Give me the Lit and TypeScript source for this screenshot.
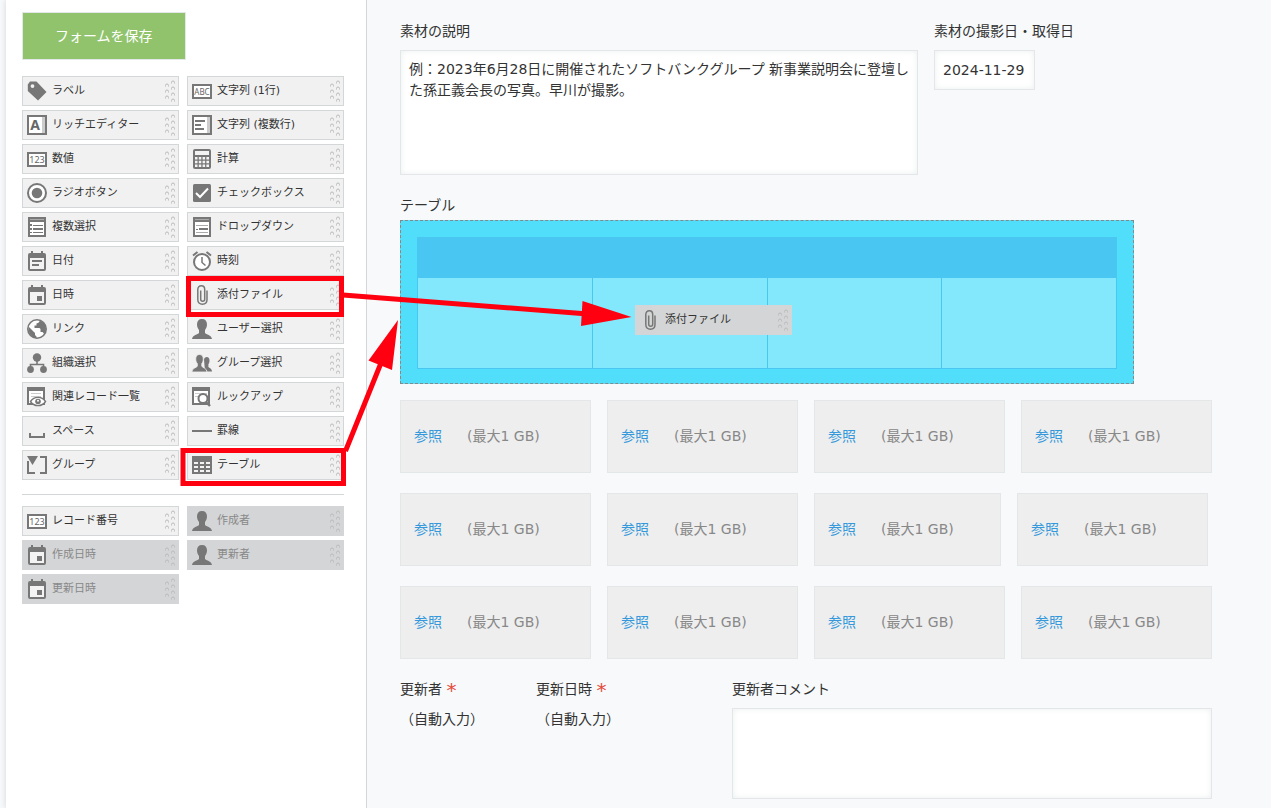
import { LitElement, html, css, svg } from "lit";
import { customElement, property } from "lit/decorators.js";

const G = "#777";
const box = (x: number, y: number, w: number, h: number, fill = "#fff") =>
  svg`<rect x=${x} y=${y} width=${w} height=${h} fill=${fill} stroke=${G} stroke-width="2"/>`;
const calendarTop = svg`<path fill=${G} d="M3 2h1V0h2v2h8V0h2v2h1q2 0 2 2v14q0 2-2 2H3q-2 0-2-2V4q0-2 2-2z"/><path fill="#f3f3f3" d="M3 7h14v11H3z"/>`;
const person = svg`<path fill=${G} d="M10 0c3.300 0 5 2 5 5.500 0 2-.8 4.200-2 5.500v3c1 1.500 6.500 2 7 6H0c.5-4 6-4.500 7-6v-3c-1.200-1.300-2-3.500-2-5.500C5 2 6.700 0 10 0z"/>`;

const ICONS: Record<string, unknown> = {
  label: svg`<path fill=${G} fill-rule="evenodd" d="M3 .5h6.500L19.500 11 11 19.500.8 10V3.500zM5.500 3.200a1.900 1.900 0 1 0 0 3.800 1.900 1.900 0 0 0 0-3.800z"/>`,
  text: svg`${box(1, 4, 18, 13)}<text x="10" y="14" text-anchor="middle" class="glyph" font-size="8">ABC</text>`,
  rich: svg`${box(1, 1, 18, 18)}<path fill="#ccc" d="M15 2h3v16h-3z"/><text x="8" y="15" text-anchor="middle" class="glyph bold" font-size="14">A</text>`,
  multi: svg`${box(1, 1, 18, 18)}<path fill="#ccc" d="M15 2h3v16h-3z"/><path fill=${G} d="M3 5h10v2H3zM3 9h6v2H3zM3 13h9v2H3z"/>`,
  number: svg`${box(1, 4, 18, 13)}<text x="10" y="14" text-anchor="middle" class="glyph" font-size="9">123</text>`,
  calc: svg`<rect x="1" y="0" width="18" height="20" rx="2" fill=${G}/><path fill="#f3f3f3" d="M3 2h14v4H3zM3 8h2.500v2.500H3zM6.800 8h2.500v2.500H6.800zM10.600 8h2.500v2.500h-2.500zM14.400 8H17v2.500h-2.600zM3 11.700h2.500v2.500H3zM6.800 11.700h2.500v2.500H6.800zM10.600 11.700h2.500v2.500h-2.500zM14.400 11.700H17v2.500h-2.600zM3 15.400h2.500v2.500H3zM6.800 15.400h2.500v2.500H6.800zM10.600 15.400h2.500v2.500h-2.500zM14.400 15.400H17v2.500h-2.600z"/>`,
  radio: svg`<circle cx="10" cy="10" r="9" fill="#fff" stroke=${G} stroke-width="2"/><circle cx="10" cy="10" r="5.300" fill=${G}/>`,
  check: svg`<rect x="1" y="1" width="18" height="18" rx="1.500" fill=${G}/><path d="M4 10l4 4 8-8.500" fill="none" stroke="#fff" stroke-width="2"/>`,
  list: svg`${box(2, 1, 16, 18)}<path fill=${G} d="M1 0h18v5H1z"/><path fill="#aaa" d="M3 2h14v1H3z"/><path fill=${G} d="M3 7h2v2H3zM3 11h2v2H3zM3 15h2v1H3zM6 8h10v1H6zM6 11h10v2H6zM6 15h10v1H6z"/>`,
  drop: svg`${box(2, 1, 16, 18)}<path fill=${G} d="M1 0h18v5H1z"/><path fill="#aaa" d="M3 2h14v1H3zM4 8h12v1H4z"/><path fill=${G} d="M4 12h2v1H4zM7 11h9v2H7z"/><path fill="#aaa" d="M4 15h12v1H4z"/>`,
  date: svg`${calendarTop}<path fill=${G} d="M5 9h10v2H5zM5 13h7v2H5z"/>`,
  datetime: svg`${calendarTop}<path fill=${G} d="M10 11h5v5h-5z"/>`,
  time: svg`<circle cx="10" cy="11" r="8" fill="#fff" stroke=${G} stroke-width="2"/><path d="M1 4.500L5.500 1M19 4.500L14.500 1" stroke=${G} stroke-width="2"/><path d="M10 6v5.500l3.500 3" fill="none" stroke=${G} stroke-width="1.500"/>`,
  clip: svg`<path d="M15 5.500v9c0 3-1.800 4.700-4.600 4.700S5.800 17.500 5.800 14.500v-10C5.800 2.200 7.300.8 9.300.8s3.400 1.400 3.400 3.700v9.700c0 1.200-.8 2-2 2s-2-.8-2-2V5.500" fill="none" stroke=${G} stroke-width="1.500"/>`,
  link: svg`<circle cx="10" cy="10" r="9.200" fill="#fff" stroke=${G} stroke-width="1.600"/><path fill=${G} d="M1.500 7.500L8 14v2l1.500 1.500V19C4 18.500 1 14 1.500 7.500zM12.500 1.500c0 2-1 2.500-3 3v2H7.500v2.500h5l1 1v3h2l1.800 2C20.500 10 19 3.500 12.500 1.500z"/>`,
  user: person,
  org: svg`<circle cx="10" cy="4.500" r="4.200" fill=${G}/><circle cx="3.500" cy="16.500" r="3.400" fill=${G}/><circle cx="16.500" cy="16.500" r="3.400" fill=${G}/><path d="M10 8v3.500M3.500 14v-2.500h13V14" fill="none" stroke=${G} stroke-width="1.600"/>`,
  group: svg`<path fill=${G} d="M14.800 4c1.800 0 2.700 1.200 2.700 3.500 0 1.500-.4 3-1.100 3.800V14c.8 1 3.600 1.500 3.600 4.500h-7l-1-12c.3-1.600 1.200-2.500 2.800-2.500z"/><path fill=${G} stroke="#f3f3f3" stroke-width=".8" d="M7.500 1.500c2.500 0 3.800 1.600 3.800 4.500 0 1.800-.6 3.500-1.500 4.500v2.800c.9 1.400 5 1.900 5.200 5.700H-.2c.2-3.800 4.500-4.300 5.500-5.700v-2.800c-.9-1-1.600-2.700-1.600-4.500 0-2.900 1.300-4.500 3.800-4.500z"/>`,
  related: svg`${box(1, 1, 16, 16)}<path fill=${G} d="M0 0h18v4H0z"/><path fill="#ccc" d="M4 6h10v1H4zM4 9h10v1H4z"/><path d="M3.500 14.500C7 9 15 9 18.500 14.500 15 20 7 20 3.500 14.500z" fill="#fff" stroke=${G} stroke-width="1.400"/><circle cx="11" cy="14.500" r="2.800" fill=${G}/><circle cx="11" cy="13.700" r="1" fill="#fff"/>`,
  lookup: svg`${box(1, 1, 16, 16)}<path fill=${G} d="M0 0h18v4H0z"/><path fill="#ccc" d="M3 6h12v1H3zM3 9h3v1H3z"/><circle cx="11" cy="11.500" r="4.500" fill="#fff" stroke=${G} stroke-width="2"/><path d="M14 15l4 4" stroke=${G} stroke-width="2.400"/>`,
  space: svg`<path d="M3 12v4h14v-4" fill="none" stroke=${G} stroke-width="2"/>`,
  rule: svg`<path d="M0 10h20" stroke=${G} stroke-width="2"/>`,
  section: svg`<path d="M1 6v12h7M13 2h6v16h-6" fill="none" stroke=${G} stroke-width="2"/><path fill=${G} d="M0 1h11L5.500 10z"/>`,
  table: svg`<path fill=${G} d="M0 1h20v18H0z"/><path fill="#f3f3f3" d="M2 7h4v2H2zM8 7h4v2H8zM14 7h4v2h-4zM2 11h4v2H2zM8 11h4v2H8zM14 11h4v2h-4zM2 15h4v2H2zM8 15h4v2H8zM14 15h4v2h-4z"/>`,
};

type Part = { icon: string; name: string; disabled?: boolean };

const PARTS: Part[] = [
  { icon: "label", name: "ラベル" },
  { icon: "text", name: "文字列 (1行)" },
  { icon: "rich", name: "リッチエディター" },
  { icon: "multi", name: "文字列 (複数行)" },
  { icon: "number", name: "数値" },
  { icon: "calc", name: "計算" },
  { icon: "radio", name: "ラジオボタン" },
  { icon: "check", name: "チェックボックス" },
  { icon: "list", name: "複数選択" },
  { icon: "drop", name: "ドロップダウン" },
  { icon: "date", name: "日付" },
  { icon: "time", name: "時刻" },
  { icon: "datetime", name: "日時" },
  { icon: "clip", name: "添付ファイル" },
  { icon: "link", name: "リンク" },
  { icon: "user", name: "ユーザー選択" },
  { icon: "org", name: "組織選択" },
  { icon: "group", name: "グループ選択" },
  { icon: "related", name: "関連レコード一覧" },
  { icon: "lookup", name: "ルックアップ" },
  { icon: "space", name: "スペース" },
  { icon: "rule", name: "罫線" },
  { icon: "section", name: "グループ" },
  { icon: "table", name: "テーブル" },
];

const SYSTEM_PARTS: Part[] = [
  { icon: "number", name: "レコード番号" },
  { icon: "user", name: "作成者", disabled: true },
  { icon: "datetime", name: "作成日時", disabled: true },
  { icon: "user", name: "更新者", disabled: true },
  { icon: "datetime", name: "更新日時", disabled: true },
];

@customElement("form-part")
class FormPart extends LitElement {
  @property() icon = "label";
  @property() name = "";
  @property({ type: Boolean }) disabled = false;
  @property({ type: Boolean }) dragging = false;

  static styles = css`
    :host { display: block; }
    .part {
      display: flex;
      align-items: center;
      width: 100%;
      height: 30px;
      box-sizing: border-box;
      margin: 0;
      padding: 0 3px 0 4px;
      border: 1px solid #d4d7d7;
      border-radius: 0;
      background: #f1f1f1;
      color: #333;
      font: 11px/16px "DejaVu Sans", "Noto Sans CJK JP", sans-serif;
      text-align: left;
      cursor: move;
    }
    .part.off { background: #d4d5d7; border-color: #d4d5d7; color: #888; }
    .part.held { background: #d4d5d6; border-color: #d4d5d6; }
    .icon { width: 20px; height: 20px; flex: none; overflow: visible; }
    .name { flex: 1; padding-left: 5px; white-space: nowrap; }
    .grip { width: 10px; height: 22px; flex: none; }
    .glyph { font-family: "Noto Sans", sans-serif; fill: #666; }
    .bold { font-weight: bold; }
  `;

  render() {
    const state = this.disabled ? "off" : this.dragging ? "held" : "";
    const arcs = [
      [0, 3], [0, 9], [0, 15],
      [6, 0], [6, 6], [6, 12], [6, 18],
    ];
    return html`<button class="part ${state}" type="button" ?disabled=${this.disabled}>
      <svg class="icon" viewBox="0 0 20 20" aria-hidden="true">${ICONS[this.icon]}</svg>
      <span class="name">${this.name}</span>
      <svg class="grip" viewBox="0 0 10 22" aria-hidden="true">
        ${arcs.map(([x, y]) => svg`<path d="M${x + 0.5} ${y + 3.5}v-1q0-1.500 1.500-1.500t1.500 1.500v1" fill="none" stroke="#bbb"/>`)}
      </svg>
    </button>`;
  }
}

@customElement("app-root")
class AppRoot extends LitElement {
  static styles = css`
    :host {
      display: block;
      position: relative;
      color: #333;
      font: 14px/21px "DejaVu Sans", "Noto Sans CJK JP", sans-serif;
    }
    .page {
      display: grid;
      grid-template-columns: 367px 1fr;
      min-height: 100vh;
      background: #f7f9fa;
      overflow: hidden;
    }
    .side {
      margin-left: 6px;
      padding: 12px 22px 0 16px;
      background: #fff;
      border-right: 1px solid #d4d7d7;
      box-shadow: 0 0 6px #d4d7d7;
      clip-path: inset(0 0 0 -6px);
    }
    .save {
      display: block;
      height: 48px;
      padding: 0 32px;
      border: 1px solid #e3e7e8;
      background: #91c36c;
      color: #fff;
      font: inherit;
    }
    .parts {
      display: grid;
      grid-template-columns: 1fr 1fr;
      gap: 4px 8px;
      margin: 0;
      padding: 0;
      list-style: none;
    }
    .save + .parts { margin-top: 16px; }
    .rule { margin: 14px 0 11px; border: 0; border-top: 1px solid #d4d7d7; }
    .form { padding: 21px 59px 9px 33px; }
    .row { display: flex; gap: 16px; }
    .field { display: flex; flex-direction: column; gap: 8px; }
    .wide { width: 518px; }
    .user { width: 120px; }
    .stamp { width: 180px; }
    .grow { flex: 1; }
    .box {
      box-sizing: border-box;
      width: 100%;
      margin: 0;
      padding: 8px 7px 8px 8px;
      border: 1px solid #e3e7e8;
      border-radius: 0;
      background: #fff;
      box-shadow: 0 0 6px #eceff0 inset;
      color: #333;
      font: inherit;
      resize: none;
      outline: none;
    }
    .note { height: 125px; overflow: hidden; }
    .day { width: 101px; height: 40px; }
    .comment { height: 91px; }
    .caption { margin: 20px 0 4px; font: inherit; }
    .drop {
      position: relative;
      width: 734px;
      box-sizing: border-box;
      padding: 16px 16px 14px;
      border: 1px dashed #888;
      background: #50defb;
    }
    .grid {
      width: 100%;
      height: 132px;
      border-collapse: collapse;
      table-layout: fixed;
      background: #84e8fd;
    }
    .grid th { height: 39px; padding: 0; background: #49c6f2; border: 1px solid #49c6f2; }
    .grid td { padding: 0; border: 1px solid #49c6f2; }
    .held { position: absolute; left: 234px; top: 84px; width: 157px; }
    .files { display: grid; gap: 20px; margin: 16px 0 20px; }
    .file {
      display: flex;
      align-items: center;
      flex: 0 1 191px;
      height: 73px;
      box-sizing: border-box;
      gap: 25px;
      padding: 0 13px;
      border: 1px solid #e3e7e8;
      background: #eee;
      color: #888;
      white-space: nowrap;
    }
    .file.short { flex-basis: 187px; }
    .file a { color: #3498db; text-decoration: none; }
    .auto { line-height: 23px; }
    .must { color: #e74c3c; font-size: 20px; line-height: 16px; vertical-align: -3px; }
    .marks { position: absolute; left: 0; top: 0; pointer-events: none; }
  `;

  private parts(list: Part[]) {
    return html`<ul class="parts">
      ${list.map((p) => html`<li><form-part .icon=${p.icon} .name=${p.name} .disabled=${!!p.disabled}></form-part></li>`)}
    </ul>`;
  }

  render() {
    return html`
      <div class="page">
        <aside class="side">
          <button class="save" type="button">フォームを保存</button>
          ${this.parts(PARTS)}
          <hr class="rule" />
          ${this.parts(SYSTEM_PARTS)}
        </aside>
        <main class="form">
          <div class="row">
            <div class="field wide">
              <label for="note">素材の説明</label>
              <textarea id="note" class="box note" .value=${"例：2023年6月28日に開催されたソフトバンクグループ 新事業説明会に登壇した孫正義会長の写真。早川が撮影。"}></textarea>
            </div>
            <div class="field">
              <label for="day">素材の撮影日・取得日</label>
              <input id="day" class="box day" type="text" .value=${"2024-11-29"} />
            </div>
          </div>
          <h2 class="caption">テーブル</h2>
          <div class="drop">
            <table class="grid" aria-label="テーブル">
              <thead><tr><th></th><th></th><th></th><th></th></tr></thead>
              <tbody><tr><td></td><td></td><td></td><td></td></tr></tbody>
            </table>
            <form-part class="held" .icon=${"clip"} .name=${"添付ファイル"} .dragging=${true}></form-part>
          </div>
          <div class="files">
            ${[0, 1, 2].map((r) => html`<div class="row">
              ${[0, 1, 2, 3].map((c) => html`<div class="file ${r === 1 && c === 2 ? "short" : ""}">
                <a href="#">参照</a><span>(最大1 GB)</span>
              </div>`)}
            </div>`)}
          </div>
          <div class="row">
            <div class="field user"><span>更新者 <span class="must">*</span></span><span class="auto">（自動入力）</span></div>
            <div class="field stamp"><span>更新日時 <span class="must">*</span></span><span class="auto">（自動入力）</span></div>
            <div class="field grow">
              <label for="comment">更新者コメント</label>
              <textarea id="comment" class="box comment"></textarea>
            </div>
          </div>
        </main>
      </div>
      <svg class="marks" width="640" height="500" viewBox="0 0 640 500" aria-hidden="true">
        <g fill="none" stroke="#ff0010" stroke-width="5">
          <path d="M188.500 278.500h153v36h-153z" />
          <path d="M183 450.500h160.500v33H183z" />
          <path d="M343 295l245 19M345.500 451L381 363" />
        </g>
        <path fill="#ff0010" d="M631.500 317l-49-16-1.500 25zM398 320l-29.500 40.500 23.500 9.500z" />
      </svg>
    `;
  }
}
